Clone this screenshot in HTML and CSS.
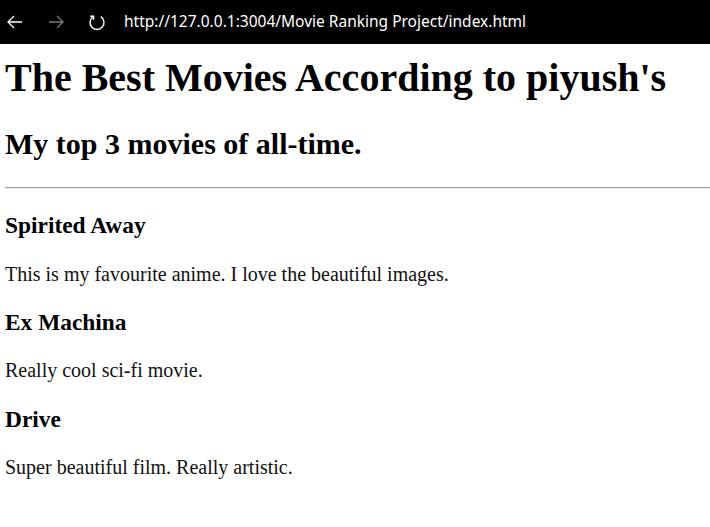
FILE: index.html
```html
<!DOCTYPE html>
<html lang="en">
<head>
<meta charset="utf-8">
<title>Movie Ranking</title>
<link rel="stylesheet" href="styles.css">
</head>
<body>
<div class="chrome">
  <svg class="nav-icon" width="18" height="18" viewBox="0 0 18 18"><path d="M16 9H2M8 3L2 9l6 6" fill="none" stroke="#fff" stroke-width="1.3"/></svg>
  <svg class="nav-icon" width="18" height="18" viewBox="0 0 18 18"><path d="M2 9h14M10 3l6 6-6 6" fill="none" stroke="#7a7a7a" stroke-width="1.3"/></svg>
  <svg class="nav-icon reload" width="18" height="18" viewBox="0 0 18 18"><path d="M5.2 3.6A7 7 0 1 0 12.8 3.6" fill="none" stroke="#fff" stroke-width="1.4"/><path d="M2.2 3.3H5.6V6.7" fill="none" stroke="#fff" stroke-width="1.4"/></svg>
  <span class="url">http://127.0.0.1:3004/Movie Ranking Project/index.html</span>
</div>
<main class="page">
  <h1 class="title">The Best Movies According to piyush's</h1>
  <h2 class="subtitle">My top 3 movies of all-time.</h2>
  <hr class="rule">
  <h3 class="movie">Spirited Away</h3>
  <p class="note">This is my favourite anime. I love the beautiful images.</p>
  <h3 class="movie">Ex Machina</h3>
  <p class="note">Really cool sci-fi movie.</p>
  <h3 class="movie">Drive</h3>
  <p class="note">Super beautiful film. Really artistic.</p>
</main>
</body>
</html>
```
FILE: styles.css
```css
html, body {
  margin: 0;
  padding: 0;
  background: #fff;
}
body {
  font-family: "Liberation Serif", "Times New Roman", serif;
  color: #000;
}
.chrome {
  height: 44px;
  background: #000;
  display: flex;
  align-items: center;
  padding-left: 6px;
  box-sizing: border-box;
}
.nav-icon {
  flex: none;
  margin-right: 23px;
}
.reload {
  margin-left: 0;
  margin-right: 18px;
}
.url {
  font-family: "Noto Sans", "Open Sans", sans-serif;
  font-size: 15.5px;
  color: #fff;
  letter-spacing: 0;
  white-space: nowrap;
  margin-top: -3px;
}
.page {
  padding: 0 0 0 5px;
  display: flow-root;
}
.title {
  font-size: 40px;
  line-height: 46px;
  font-weight: bold;
  margin: 10.5px 0 26.8px;
}
.subtitle {
  font-size: 30px;
  line-height: 34.5px;
  font-weight: bold;
  margin: 0 0 25px;
}
.rule {
  margin: 0 0 23.4px;
  border: 0;
  border-top: 1px solid #9a9a9a;
  border-bottom: 1px solid #eeeeee;
  height: 0;
}
.movie {
  font-size: 23.4px;
  line-height: 27px;
  font-weight: bold;
  margin: 0 0 23.4px;
}
.note {
  font-size: 20px;
  line-height: 23px;
  margin: 0 0 23.4px;
  color: #111;
}
```
